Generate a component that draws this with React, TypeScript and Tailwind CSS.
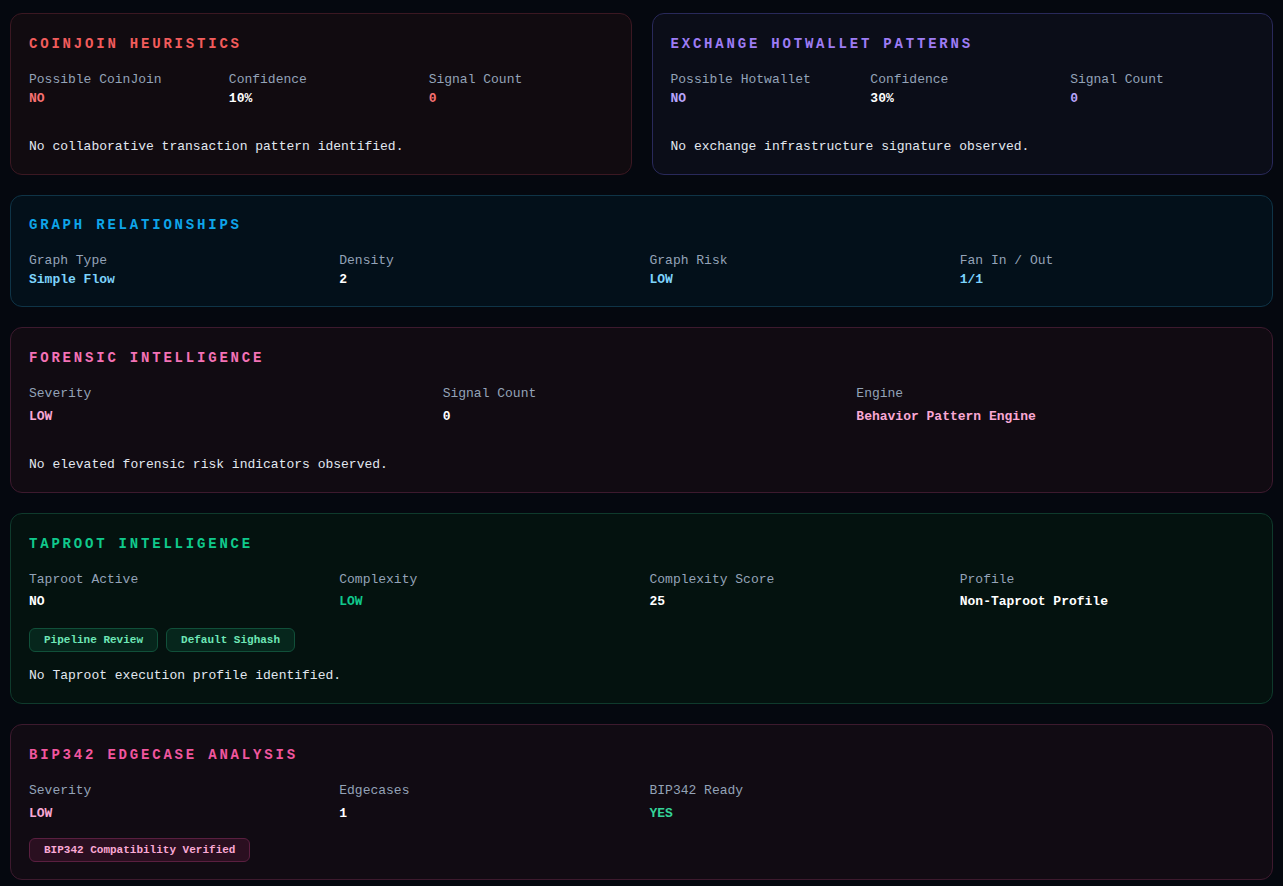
import React from "react";

type Stat = { label: string; value: string; tone: string };

const Card = ({
  title,
  titleTone,
  box,
  cols,
  stats,
  gapTop = "mt-0",
  badges,
  badgeTone,
  badgeTop = "mt-4",
  desc,
  descTop = "mt-7",
  pad = "pt-5 pb-[17px]",
}: {
  title: string;
  titleTone: string;
  box: string;
  cols: string;
  stats: Stat[];
  gapTop?: string;
  badges?: string[];
  badgeTone?: string;
  badgeTop?: string;
  desc?: string;
  descTop?: string;
  pad?: string;
}) => {
  return (
    <section className={`rounded-xl border px-[18px] ${pad} ${box}`}>
      <h2 className={`text-sm leading-5 font-bold tracking-[0.2em] ${titleTone}`}>{title}</h2>
      <div className={`grid gap-x-4 mt-[17px] ${cols}`}>
        {stats.map((s) => (
          <div key={s.label}>
            <div className="text-[13px] leading-[18px] text-[#94a3b8]">{s.label}</div>
            <div className={`text-[13px] leading-5 font-bold ${gapTop} ${s.tone}`}>{s.value}</div>
          </div>
        ))}
      </div>
      {badges && (
        <div className={`flex gap-2 ${badgeTop}`}>
          {badges.map((b) => (
            <span
              key={b}
              className={`h-6 px-[14px] flex items-center rounded-md border text-[11px] font-bold ${badgeTone}`}
            >
              {b}
            </span>
          ))}
        </div>
      )}
      {desc && (
        <p className={`text-[13px] leading-5 text-[#e2e8f0] ${descTop}`}>{desc}</p>
      )}
    </section>
  );
};

export default function App() {
  return (
    <div
      className="min-h-screen bg-[#05080f] px-[10px] pt-[13px] pb-5 flex flex-col gap-5"
      style={{ fontFamily: '"Liberation Mono", "DejaVu Sans Mono", monospace' }}
    >
      <div className="grid grid-cols-2 gap-5">
        <Card
          title="COINJOIN HEURISTICS"
          titleTone="text-[#f25c5c]"
          box="bg-[#110b10] border-[#3b1822]"
          cols="grid-cols-3"
          stats={[
            { label: "Possible CoinJoin", value: "NO", tone: "text-[#f87171]" },
            { label: "Confidence", value: "10%", tone: "text-white" },
            { label: "Signal Count", value: "0", tone: "text-[#f87171]" },
          ]}
          desc="No collaborative transaction pattern identified."
        />
        <Card
          title="EXCHANGE HOTWALLET PATTERNS"
          titleTone="text-[#9d7cf4]"
          box="bg-[#0b0d18] border-[#29295a]"
          cols="grid-cols-3"
          stats={[
            { label: "Possible Hotwallet", value: "NO", tone: "text-[#b8a4fb]" },
            { label: "Confidence", value: "30%", tone: "text-white" },
            { label: "Signal Count", value: "0", tone: "text-[#b8a4fb]" },
          ]}
          desc="No exchange infrastructure signature observed."
        />
      </div>

      <Card
        title="GRAPH RELATIONSHIPS"
        titleTone="text-[#0ea5e9]"
        box="bg-[#03101a] border-[#0f3447]"
        cols="grid-cols-4"
        pad="pt-[19px] pb-4"
        stats={[
          { label: "Graph Type", value: "Simple Flow", tone: "text-[#7dd3fc]" },
          { label: "Density", value: "2", tone: "text-white" },
          { label: "Graph Risk", value: "LOW", tone: "text-[#7dd3fc]" },
          { label: "Fan In / Out", value: "1/1", tone: "text-[#7dd3fc]" },
        ]}
      />

      <Card
        title="FORENSIC INTELLIGENCE"
        titleTone="text-[#f472b6]"
        box="bg-[#110b12] border-[#3d1a2e]"
        cols="grid-cols-3"
        gapTop="mt-1"
        stats={[
          { label: "Severity", value: "LOW", tone: "text-[#f9a8d4]" },
          { label: "Signal Count", value: "0", tone: "text-white" },
          { label: "Engine", value: "Behavior Pattern Engine", tone: "text-[#f9a8d4]" },
        ]}
        desc="No elevated forensic risk indicators observed."
      />

      <Card
        title="TAPROOT INTELLIGENCE"
        titleTone="text-[#10c98c]"
        box="bg-[#04120f] border-[#0f3a2c]"
        cols="grid-cols-4"
        gapTop="mt-[3px]"
        stats={[
          { label: "Taproot Active", value: "NO", tone: "text-white" },
          { label: "Complexity", value: "LOW", tone: "text-[#10c98c]" },
          { label: "Complexity Score", value: "25", tone: "text-white" },
          { label: "Profile", value: "Non-Taproot Profile", tone: "text-white" },
        ]}
        badges={["Pipeline Review", "Default Sighash"]}
        badgeTone="bg-[#06261c] border-[#11503a] text-[#6ee7b7]"
        desc="No Taproot execution profile identified."
        descTop="mt-3.5"
      />

      <Card
        title="BIP342 EDGECASE ANALYSIS"
        titleTone="text-[#f0569e]"
        box="bg-[#110b13] border-[#3d1a2e]"
        cols="grid-cols-4"
        gapTop="mt-1"
        stats={[
          { label: "Severity", value: "LOW", tone: "text-[#f9a8d4]" },
          { label: "Edgecases", value: "1", tone: "text-white" },
          { label: "BIP342 Ready", value: "YES", tone: "text-[#34d399]" },
        ]}
        badges={["BIP342 Compatibility Verified"]}
        badgeTone="bg-[#2a0f20] border-[#5a1f40] text-[#f9a8d4]"
        badgeTop="mt-[14px]"
      />
    </div>
  );
}
